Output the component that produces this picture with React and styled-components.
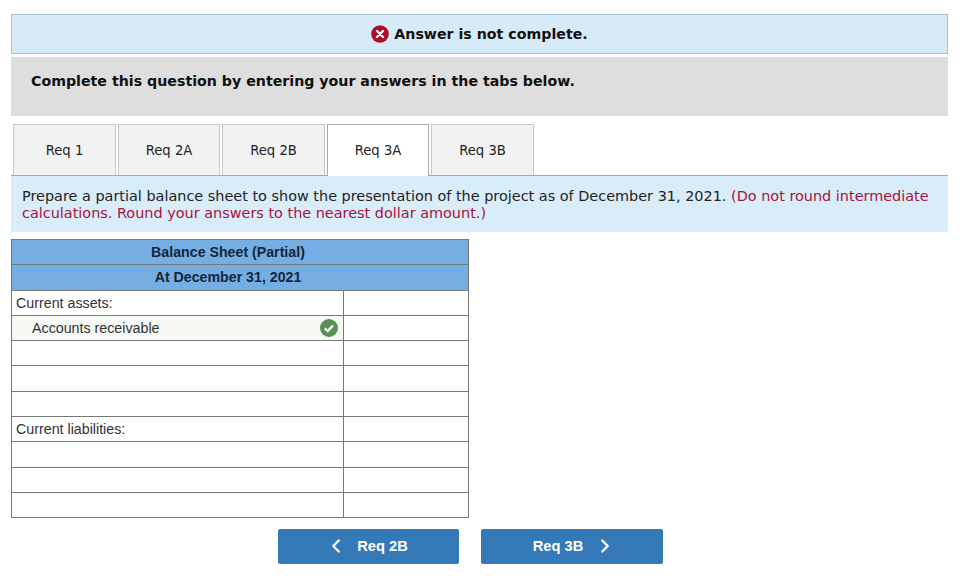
import React from "react";
import styled, { createGlobalStyle } from "styled-components";
import { ChevronLeft, ChevronRight } from "lucide-react";

const Global = createGlobalStyle`
  html, body { margin: 0; padding: 0; background: #fff; }
  * { box-sizing: border-box; }
`;
const Page = styled.div`
  width: 976px; height: 581px; padding: 14px 28px 0 11px; overflow: hidden;
  font-family: "DejaVu Sans", Verdana, sans-serif; color: #111;
`;
const Banner = styled.div`
  height: 40px; border: 1px solid #a3c3d6; background: #d7eaf7;
  display: flex; align-items: center; justify-content: center; gap: 5px;
  font-size: 14.2px; font-weight: 700;
`;
const Prompt = styled.div`
  height: 59px; margin-top: 3px; background: #dedede; padding: 15px 20px;
  font-size: 14.2px; font-weight: 700; line-height: 18px;
`;
const Tabs = styled.div`
  display: flex; gap: 2px; margin-top: 8px; padding-left: 2px; height: 52px;
  border-bottom: 1px solid #a8a8a8;
`;
const Tab = styled.div`
  width: ${p => p.$w}px; height: ${p => p.$active ? 52 : 51}px;
  background: ${p => p.$active ? "#fff" : "#f2f2f2"};
  border: 1px solid ${p => p.$active ? "#a8a8a8" : "#c8c8c8"};
  border-bottom: none;
  display: flex; align-items: center; justify-content: center;
  font-size: 13.2px; color: #222; position: relative;
`;
const Instruction = styled.div`
  height: 56px; background: #d9ecf9; padding: 12px 11px 0;
  font-size: 14.43px; line-height: 17px; color: #222;
`;
const Line = styled.div` white-space: nowrap; `;
const Red = styled.span` color: #a6123d; `;
const Sheet = styled.div`
  width: 458px; margin-top: 7px; border: 1px solid #777; border-bottom: none;
  font-family: "Liberation Sans", Arial, sans-serif; font-size: 14.25px; color: #333;
`;
const Head = styled.div`
  height: ${p => p.$h}px; background: #74aee3; border-bottom: 1px solid #777;
  display: flex; align-items: center; justify-content: center; padding: 0 24px ${p => p.$h - 25}px 0;
  font-size: 14.2px; font-weight: 700; color: #14263c;
`;
const Row = styled.div`
  display: grid; grid-template-columns: 332px 1fr; height: ${p => p.$h || 25}px;
  border-bottom: 1px solid #777;
`;
const Label = styled.div`
  border-right: 1px solid #777; display: flex; align-items: center; justify-content: space-between;
  padding: 0 5px 0 ${p => p.$indent ? 20 : 4}px;
  background: ${p => p.$tint ? "#f5f8f3" : "#fff"};
`;
const Cell = styled.div``;
const Nav = styled.div`
  display: flex; gap: 22px; margin-top: 11px; padding-left: 267px;
`;
const NavButton = styled.div`
  width: ${p => p.$w}px; height: 35px; background: #3579b9; border-radius: 2px; color: #fff;
  display: flex; align-items: center; justify-content: center; gap: ${p => p.$gap}px;
  padding: 0 ${p => p.$pr || 0}px 1px ${p => p.$pl || 0}px;
  font-family: "Liberation Sans", Arial, sans-serif; font-weight: 700; font-size: 14.7px;
`;

const ErrorIcon = () => (
  <svg width="18" height="18" viewBox="0 0 18 18">
    <circle cx="9" cy="9" r="8.8" fill="#b00c28" />
    <path d="M6 6l6 6M12 6l-6 6" stroke="#fff" strokeWidth="2.4" strokeLinecap="round" />
  </svg>
);
const CheckIcon = () => (
  <svg width="18" height="18" viewBox="0 0 18 18">
    <circle cx="9" cy="9" r="9" fill="#5a8f5a" />
    <path d="M4.8 9.4l2.9 2.7 5.3-5.6" fill="none" stroke="#fff" strokeWidth="2.2" />
  </svg>
);

const tabs = [["Req 1", 103], ["Req 2A", 102], ["Req 2B", 103], ["Req 3A", 102], ["Req 3B", 103]];
const rows = [
  { label: "Current assets:" },
  { label: "Accounts receivable", indent: true, ok: true },
  {}, { h: 26 }, {},
  { label: "Current liabilities:" },
  { h: 26 }, {}, {},
];

export default function App() {
  return (
    <Page>
      <Global />
      <Banner><ErrorIcon />Answer is not complete.</Banner>
      <Prompt>Complete this question by entering your answers in the tabs below.</Prompt>
      <Tabs>
        {tabs.map(([t, w]) => <Tab key={t} $w={w} $active={t === "Req 3A"}>{t}</Tab>)}
      </Tabs>
      <Instruction>
        <Line>
          Prepare a partial balance sheet to show the presentation of the project as of December 31, 2021.{" "}
          <Red>(Do not round intermediate</Red>
        </Line>
        <Line><Red>calculations. Round your answers to the nearest dollar amount.)</Red></Line>
      </Instruction>
      <Sheet>
        <Head $h={25}>Balance Sheet (Partial)</Head>
        <Head $h={26}>At December 31, 2021</Head>
        {rows.map((r, i) => (
          <Row key={i} $h={r.h}>
            <Label $indent={r.indent} $tint={r.ok}>
              <span>{r.label}</span>
              {r.ok && <CheckIcon />}
            </Label>
            <Cell />
          </Row>
        ))}
      </Sheet>
      <Nav>
        <NavButton $w={181} $gap={10} $pr={4}><ChevronLeft size={22} strokeWidth={2.6} />Req 2B</NavButton>
        <NavButton $w={182} $gap={11} $pl={5}>Req 3B<ChevronRight size={22} strokeWidth={2.6} /></NavButton>
      </Nav>
    </Page>
  );
}
